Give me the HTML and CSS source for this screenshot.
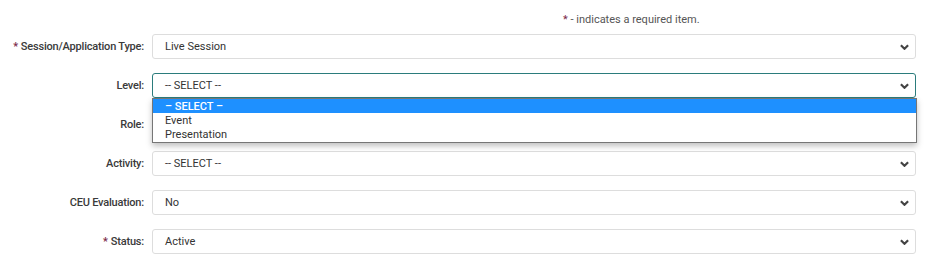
FILE: index.html
```html
<!DOCTYPE html>
<html lang="en">
<head>
    <meta charset="UTF-8">
    <title>Session Details</title>
    <link rel="stylesheet" href="styles.css">
</head>
<body>

    <div class="form">
        <p class="note"><span class="req">*</span> - indicates a required item.</p>

        <div class="row">
            <label><span class="req">*</span>Session/Application Type:</label>
            <div class="select">Live Session<svg class="chev" viewBox="0 0 10 6"><path d="M1 1 L5 5 L9 1" /></svg></div>
        </div>

        <div class="row">
            <label>Level:</label>
            <div class="select-wrap">
                <div class="select focus">-- SELECT --<svg class="chev" viewBox="0 0 10 6"><path d="M1 1 L5 5 L9 1" /></svg></div>
                <ul class="options">
                    <li class="active">– SELECT –</li>
                    <li>Event</li>
                    <li>Presentation</li>
                </ul>
            </div>
        </div>

        <div class="row">
            <label>Role:</label>
            <div class="select"><span class="covered">-- SELECT --</span><svg class="chev" viewBox="0 0 10 6"><path d="M1 1 L5 5 L9 1" /></svg></div>
        </div>

        <div class="row">
            <label>Activity:</label>
            <div class="select">-- SELECT --<svg class="chev" viewBox="0 0 10 6"><path d="M1 1 L5 5 L9 1" /></svg></div>
        </div>

        <div class="row">
            <label>CEU Evaluation:</label>
            <div class="select">No<svg class="chev" viewBox="0 0 10 6"><path d="M1 1 L5 5 L9 1" /></svg></div>
        </div>

        <div class="row">
            <label><span class="req">*</span>Status:</label>
            <div class="select">Active<svg class="chev" viewBox="0 0 10 6"><path d="M1 1 L5 5 L9 1" /></svg></div>
        </div>
    </div>

</body>
</html>
```

FILE: styles.css
```css
body {
    margin: 0;
    font-family: Roboto, "Liberation Sans", Arial, sans-serif;
    font-size: 11px;
    color: #444;
    background-color: #fff;
}
.form {
    padding-top: 13px;
    width: 916px;
}
.note {
    margin: 0 0 7px 563px;
    font-size: 11px;
    line-height: 14px;
    color: #555;
}
.req {
    color: #7a2848;
    margin-right: 3px;
}
.note .req {
    margin-right: 0;
}
.row {
    display: grid;
    grid-template-columns: 144px 1fr;
    column-gap: 8px;
    align-items: center;
    height: 25px;
    margin-bottom: 14px;
}
label {
    text-align: right;
    font-weight: 500;
    letter-spacing: -0.2px;
    color: #3a3a3a;
}
.select-wrap {
    position: relative;
}
.select {
    display: flex;
    align-items: center;
    justify-content: space-between;
    box-sizing: border-box;
    height: 25px;
    padding: 0 6px 0 12px;
    border: 1px solid #ddd;
    border-radius: 3px;
    background-color: #fff;
    color: #333;
}
.select.focus {
    border-color: #2b7c7c;
}
.covered {
    visibility: hidden;
}
.chev {
    width: 9px;
    height: 6px;
}
.chev path {
    fill: none;
    stroke: #444;
    stroke-width: 2.4;
}
.options {
    position: absolute;
    top: 25px;
    left: 0;
    right: -1px;
    margin: 0;
    padding: 0 0 1px 0;
    list-style: none;
    background-color: #fff;
    border: 1px solid #767676;
    box-shadow: 0 3px 6px rgba(0, 0, 0, 0.25);
    z-index: 2;
}
.options li {
    height: 14px;
    line-height: 15px;
    padding-left: 12px;
    color: #333;
}
.options li.active {
    background-color: #1e90ff;
    color: #fff;
    font-weight: 500;
}
```
